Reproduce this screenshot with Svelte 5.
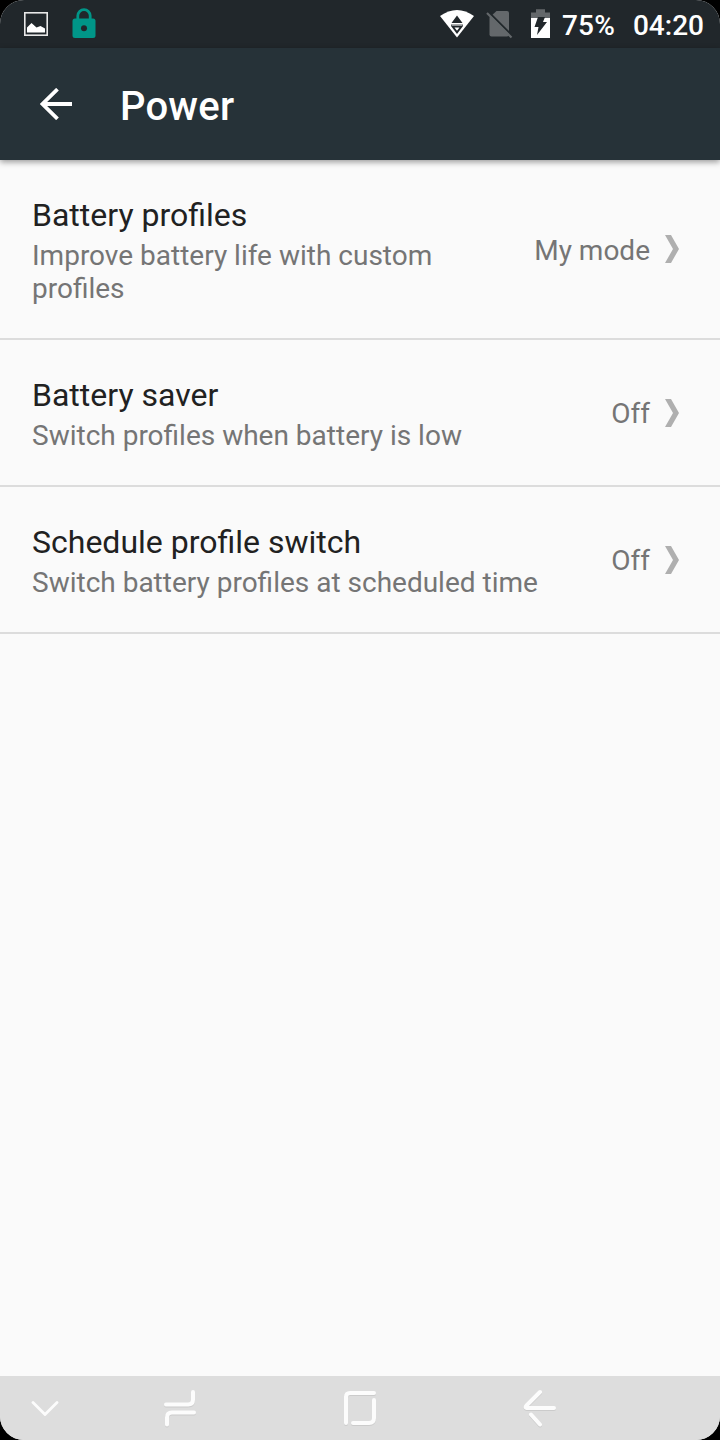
<script lang="ts">
  type Row = { title: string; summary: string; value: string };

  const rows: Row[] = [
    {
      title: 'Battery profiles',
      summary: 'Improve battery life with custom profiles',
      value: 'My mode',
    },
    { title: 'Battery saver', summary: 'Switch profiles when battery is low', value: 'Off' },
    {
      title: 'Schedule profile switch',
      summary: 'Switch battery profiles at scheduled time',
      value: 'Off',
    },
  ];
</script>

<div class="screen">
  <div class="status">
    <div class="notifications">
      <svg width="24" height="24" viewBox="0 0 24 24">
        <rect x="0.8" y="0.8" width="22.4" height="22.4" fill="none" stroke="#e8e8e8" stroke-width="1.6" />
        <path d="M3 20.5v-5L7.5 11l5 4.5 4-1.5 4.5 2.5v4z" fill="#fff" />
      </svg>
      <svg class="lock" width="24" height="32" viewBox="0 0 24 32">
        <path d="M5.8 13V7.8a6.2 6.2 0 0 1 12.4 0V13" fill="none" stroke="#009688" stroke-width="2.8" />
        <rect x="0.5" y="10.5" width="23" height="19.5" rx="2.5" fill="#009688" />
        <circle cx="12" cy="20.3" r="3" fill="#21272b" />
      </svg>
    </div>
    <div class="system">
      <svg class="wifi" width="36" height="30" viewBox="0 0 36 30">
        <path d="M1 7Q18-5 35 7L18 28.5z" fill="#fff" />
        <path d="M18 6.5l5.5 7.5h-11zM12 15.5h12V17l-6 8-6-8z" fill="#21272b" />
        <path d="M12.5 15.8h11v.8h-11zM15.5 18.5h5L18 21.8z" fill="#fff" />
      </svg>
      <svg class="sim" width="28" height="30" viewBox="0 0 28 30">
        <path d="M10.5 2H21a2 2 0 0 1 2 2v21.5a2 2 0 0 1-2 2H5.5a2 2 0 0 1-2-2V8.5z" fill="#64686b" />
        <path d="M2 2.5l24 24" stroke="#21272b" stroke-width="2.2" />
        <path d="M1 4l24.5 24.5" stroke="#64686b" stroke-width="2.2" />
      </svg>
      <svg class="battery" width="19" height="30" viewBox="0 0 19 30">
        <path d="M0 3.5h5V.3h9v3.2h5V10H0z" fill="#64686b" />
        <path d="M0 9h19v20H0z" fill="#fff" />
        <path d="M7 8h7l-2 5h4L6 26l1.5-8h-4z" fill="#21272b" />
      </svg>
      <span class="percent">75%</span>
      <span class="clock">04:20</span>
    </div>
  </div>

  <header>
    <svg width="32" height="32" viewBox="0 0 32 32" fill="none" stroke="#fff">
      <path d="M17.5 1.2L2.5 16l15 14.8M2.5 16H32" stroke-width="3.8" />
    </svg>
    <h1>Power</h1>
  </header>

  <main>
    {#each rows as row}
      <div class="row">
        <div class="label">
          <div class="title">{row.title}</div>
          <div class="summary">{row.summary}</div>
        </div>
        <span class="value">{row.value}</span>
        <svg width="14" height="28" viewBox="0 0 14 28">
          <path d="M0 0h6l8 14-8 14H0l8-14z" fill="#afafaf" />
        </svg>
      </div>
    {/each}
  </main>

  <nav>
    <svg class="hide" width="28" height="16" viewBox="0 0 28 16">
      <path d="M2 2.5l12 12 12-12" />
    </svg>
    <svg class="recents" width="34" height="38" viewBox="0 0 34 38">
      <path d="M3 15.5h22q5 0 5-5V3M31 23.5H9q-5 0-5 5v7" />
    </svg>
    <svg class="home" width="34" height="36" viewBox="0 0 34 36">
      <path d="M3 33V7q0-4 4-4h24M31 10v18q0 5-5 5H10" />
    </svg>
    <svg class="back" width="34" height="38" viewBox="0 0 34 38">
      <path d="M17 3L4 16q-3 3 1 3h26M8 25.5l9 10" />
    </svg>
  </nav>
</div>

<style>
  :global(body) {
    background: #000;
  }
  .screen {
    width: 720px;
    height: 1440px;
    display: flex;
    flex-direction: column;
    overflow: hidden;
    border-radius: 24px;
    background: #fafafa;
    font-family: Roboto, 'Liberation Sans', sans-serif;
  }
  svg {
    display: block;
    flex: none;
  }
  .status {
    height: 48px;
    display: flex;
    justify-content: space-between;
    background: #21272b;
    color: #fff;
  }
  .notifications,
  .system {
    display: flex;
    align-items: center;
  }
  .notifications {
    padding-left: 24px;
    gap: 24px;
  }
  .system {
    padding-right: 16px;
    font-size: 28px;
    font-weight: 500;
  }
  .sim {
    margin-left: 11px;
  }
  .battery {
    margin-left: 17px;
  }
  .percent {
    margin: 2px 0 0 12px;
    letter-spacing: 0.2px;
  }
  .clock {
    margin: 2px 0 0 18px;
  }
  header {
    position: relative;
    height: 112px;
    display: flex;
    align-items: center;
    gap: 48px;
    padding-left: 40px;
    background: #263238;
    color: #fff;
    box-shadow: 0 2px 6px rgba(0, 0, 0, 0.4);
  }
  h1 {
    margin: 4px 0 0;
    font-size: 40px;
    font-weight: 500;
    letter-spacing: 0.2px;
  }
  main {
    flex: 1;
  }
  .row {
    display: flex;
    align-items: center;
    padding: 33px 41px 33px 32px;
    border-bottom: 2px solid #dcdcdc;
  }
  .label {
    flex: 1;
    padding-right: 64px;
  }
  .title {
    margin-bottom: 2px;
    font-size: 32px;
    line-height: 44px;
    color: #212121;
  }
  .summary {
    font-size: 28px;
    line-height: 33px;
    color: #757575;
  }
  .value {
    padding-top: 2px;
    margin-right: 15px;
    font-size: 28px;
    line-height: 33px;
    color: #757575;
    white-space: nowrap;
  }
  nav {
    height: 64px;
    display: flex;
    align-items: center;
    background: #dddddd;
  }
  nav svg {
    fill: none;
    stroke: #fcfcfc;
    stroke-width: 4;
    stroke-linecap: round;
    filter: drop-shadow(0 1px 0 rgba(0, 0, 0, 0.08));
  }
  nav .hide {
    margin-left: 31px;
    stroke-width: 2.8;
    filter: none;
  }
  nav .recents {
    margin-left: 104px;
  }
  nav .home {
    margin-left: 146px;
  }
  nav .back {
    margin-left: 146px;
  }
</style>
